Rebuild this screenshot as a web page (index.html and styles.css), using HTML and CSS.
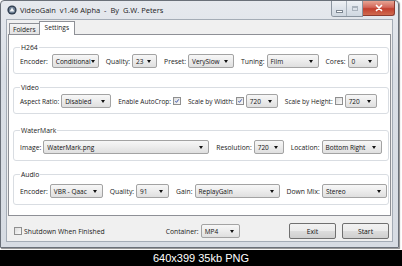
FILE: index.html
```html
<!DOCTYPE html>
<html>
<head>
<meta charset="utf-8">
<link rel="stylesheet" href="styles.css">
</head>
<body>
<div class="shot">
  <div class="window">
    <div class="titlebar">
      <svg class="appicon" viewBox="0 0 10 10" width="10" height="10">
        <circle cx="5" cy="5" r="4.6" fill="#2f3d4f"/>
        <circle cx="5" cy="5" r="3.2" fill="#6f8196"/>
        <path d="M5 2.4 L7.4 6.6 L2.6 6.6 Z" fill="#f4f6f8"/>
      </svg>
      <span class="title">VideoGain  v1.46 Alpha  -  By  G.W. Peters</span>
      <div class="capbtns">
        <div class="minmax">
          <span class="cb cb-min"><i></i></span>
          <span class="cb cb-max"><i></i></span>
        </div>
        <span class="cb cb-close">
          <svg viewBox="0 0 10 8" width="10" height="8"><path d="M2.5 1.5 L7.5 6.5 M7.5 1.5 L2.5 6.5" stroke="#fff" stroke-width="1.7" stroke-linecap="round"/></svg>
        </span>
      </div>
    </div>
    <div class="client">
      <div class="tabs">
        <span class="tab">Folders</span>
        <span class="tab active">Settings</span>
      </div>
      <div class="tabpage">
        <div class="group g-h264">
          <span class="gtitle">H264</span>
          <div class="row">
            <span class="lbl">Encoder:</span><span class="sel w47">Conditional</span>
            <span class="lbl">Quality:</span><span class="sel w25">23</span>
            <span class="lbl">Preset:</span><span class="sel w46">VerySlow</span>
            <span class="lbl">Tuning:</span><span class="sel w52">Film</span>
            <span class="lbl">Cores:</span><span class="sel w30">0</span>
          </div>
        </div>
        <div class="group g-video">
          <span class="gtitle">Video</span>
          <div class="row">
            <span class="lbl">Aspect Ratio:</span><span class="sel w50">Disabled</span>
            <span class="lbl">Enable AutoCrop:</span><span class="chk on"><svg viewBox="0 0 8 8"><path d="M1.8 4.2 L3.3 5.8 L6.3 1.8" fill="none" stroke="#2b4aa8" stroke-width="1.2"/></svg></span>
            <span class="lbl">Scale by Width:</span><span class="chk on"><svg viewBox="0 0 8 8"><path d="M1.8 4.2 L3.3 5.8 L6.3 1.8" fill="none" stroke="#2b4aa8" stroke-width="1.2"/></svg></span><span class="sel w32 tight">720</span>
            <span class="lbl">Scale by Height:</span><span class="chk"></span><span class="sel w32 tight">720</span>
          </div>
        </div>
        <div class="group g-wm">
          <span class="gtitle">WaterMark</span>
          <div class="row">
            <span class="lbl">Image:</span><span class="sel w166">WaterMark.png</span>
            <span class="lbl">Resolution:</span><span class="sel w30">720</span>
            <span class="lbl">Location:</span><span class="sel w60">Bottom Right</span>
          </div>
        </div>
        <div class="group g-audio">
          <span class="gtitle">Audio</span>
          <div class="row">
            <span class="lbl">Encoder:</span><span class="sel w53">VBR - Qaac</span>
            <span class="lbl">Quality:</span><span class="sel w33">91</span>
            <span class="lbl">Gain:</span><span class="sel w85">ReplayGain</span>
            <span class="lbl">Down Mix:</span><span class="sel w65">Stereo</span>
          </div>
        </div>
      </div>
      <div class="bottom">
        <span class="chk"></span><span class="lbl shut">Shutdown When Finished</span>
        <span class="lbl cont">Container:</span><span class="sel w39">MP4</span>
        <span class="btn exit">Exit</span>
        <span class="btn">Start</span>
      </div>
    </div>
  </div>
</div>
<div class="caption">640x399 35kb PNG</div>
</body>
</html>
```

FILE: styles.css
```css
* { box-sizing: border-box; }
html, body { margin: 0; padding: 0; }
body {
  width: 402px;
  height: 266px;
  overflow: hidden;
  background: #000;
  font-family: "Open Sans", "Noto Sans", sans-serif;
  font-size: 7px;
  line-height: 9px;
  color: #222;
}
.shot {
  width: 402px;
  height: 250px;
  background: #fff;
}
.window {
  width: 399px;
  height: 248px;
  border: 1px solid #6a7079;
  border-radius: 4px 4px 0 0;
  background: linear-gradient(#e6e9ee, #d9dee5 30%, #d7dce3);
  padding: 0 5px 5px 5px;
  display: flex;
  flex-direction: column;
  box-shadow: 1px 1px 1px rgba(0,0,0,0.45);
}
.titlebar {
  height: 18px;
  display: flex;
  align-items: center;
  flex-shrink: 0;
}
.appicon { width: 10px; height: 10px; margin: 0 3px 0 1px; flex-shrink: 0; }
.title {
  font-size: 7.5px;
  color: #1c1c1c;
  white-space: pre;
  margin-top: 1px;
}
.capbtns {
  margin-left: auto;
  margin-right: -2px;
  align-self: flex-start;
  display: flex;
}
.minmax {
  display: flex;
  border: 1px solid #8a949f;
  border-top: none;
  border-radius: 0 0 0 3px;
  overflow: hidden;
}
.cb {
  height: 15px;
  display: flex;
  align-items: center;
  justify-content: center;
}
.cb-min, .cb-max {
  width: 15px;
  background: linear-gradient(#eef1f5, #dde3ea 50%, #cfd7e0);
}
.cb-min { border-right: 1px solid #a8b1bb; }
.cb-min i {
  display: block;
  width: 7px;
  height: 3px;
  background: #fff;
  border: 1px solid #7c8691;
  margin-top: 5px;
}
.cb-max i {
  display: block;
  width: 6px;
  height: 5px;
  border: 1px solid #aab3bd;
  border-top-width: 2px;
}
.cb-close {
  width: 32px;
  height: 15px;
  background: linear-gradient(#e8a493, #d2675a 45%, #c2402f 55%, #cf6a4f);
  border: 1px solid #8d3b30;
  border-top: none;
  border-left: none;
  border-radius: 0 0 3px 0;
}
.client {
  flex: 1;
  background: #f0f0f0;
  border: 1px solid #a4acb6;
  display: flex;
  flex-direction: column;
}
.tabs {
  height: 13px;
  display: flex;
  align-items: flex-end;
  padding-left: 2px;
  margin-top: 1px;
  flex-shrink: 0;
}
.tab {
  font-size: 6.6px;
  height: 11px;
  padding: 0 3px;
  border: 1px solid #8e9096;
  border-bottom: none;
  background: linear-gradient(#f4f4f4, #e3e3e3);
  display: flex;
  align-items: center;
  color: #222;
}
.tab.active {
  height: 14px;
  margin-bottom: -1px;
  margin-left: -1px;
  padding: 0 5px 2px;
  background: #fff;
  position: relative;
  z-index: 1;
}
.tabpage {
  margin-left: 1px;
  width: 383px;
  height: 182px;
  border: 1px solid #8e9096;
  background: #fff;
  padding: 12px 1px 0 4px;
  flex-shrink: 0;
}
.group {
  border: 1px solid #d9dde2;
  border-radius: 3px;
  padding: 0 6px 5px 6px;
  margin-bottom: 13px;
}
.gtitle {
  display: block;
  width: fit-content;
  font-size: 6.8px;
  line-height: 9px;
  background: #fff;
  padding: 0 1px;
  margin-top: -5px;
  color: #222;
}
.row {
  display: flex;
  align-items: center;
  height: 14px;
  margin-top: 2px;
}
.g-wm .row, .g-audio .row { margin-top: 5px; }
.g-wm, .g-audio { padding-bottom: 6px; }
.g-video { margin-bottom: 16px; }
.lbl {
  font-size: 6.8px;
  white-space: nowrap;
  margin-left: 7px;
  margin-right: 2px;
  color: #222;
}
.g-h264 .lbl:first-child { margin-right: 4px; }
.g-video .lbl { font-size: 6.5px; }
.row .lbl:first-child { margin-left: 0; }
.sel {
  height: 14px;
  border: 1px solid #a3a3a3;
  border-radius: 2px;
  background: linear-gradient(#f7f7f7, #ececec 50%, #dfdfdf);
  display: flex;
  align-items: center;
  padding-left: 3px;
  font-size: 6.5px;
  white-space: nowrap;
  flex-shrink: 0;
  color: #111;
  overflow: hidden;
}
.sel::after {
  content: "";
  margin-left: auto;
  margin-right: 5px;
  border-left: 2.5px solid transparent;
  border-right: 2.5px solid transparent;
  border-top: 3px solid #111;
  flex-shrink: 0;
}
.tight { margin-left: 2px; }
.w25 { width: 25px; } .w30 { width: 30px; } .w32 { width: 32px; } .w33 { width: 33px; }
.w39 { width: 39px; } .w46 { width: 46px; } .w47 { width: 47px; } .w50 { width: 50px; }
.w52 { width: 52px; } .w53 { width: 53px; } .w60 { width: 60px; } .w65 { width: 65px; }
.w85 { width: 85px; } .w166 { width: 166px; }
.chk {
  width: 8px;
  height: 8px;
  border: 1px solid #8f8f8f;
  background: linear-gradient(135deg, #dcdcdc, #fafafa);
  flex-shrink: 0;
  display: flex;
}
.chk svg { width: 6px; height: 6px; }
.bottom {
  display: flex;
  align-items: center;
  height: 16px;
  margin-top: 7px;
  padding: 0 3px 0 7px;
}
.bottom .shut { margin-left: 2px; }
.bottom .cont { margin-left: 59px; }
.btn {
  width: 47px;
  height: 16px;
  border: 1px solid #707070;
  border-radius: 2px;
  background: linear-gradient(#f2f2f2, #ebebeb 50%, #dddddd 50%, #cfcfcf);
  font-size: 6.8px;
  display: flex;
  align-items: center;
  justify-content: center;
  margin-left: 6px;
  color: #111;
}
.btn.exit { margin-left: auto; }
.caption {
  height: 16px;
  line-height: 16px;
  text-align: center;
  color: #fff;
  font-family: "Liberation Sans", Arial, sans-serif;
  font-size: 11px;
}
```
